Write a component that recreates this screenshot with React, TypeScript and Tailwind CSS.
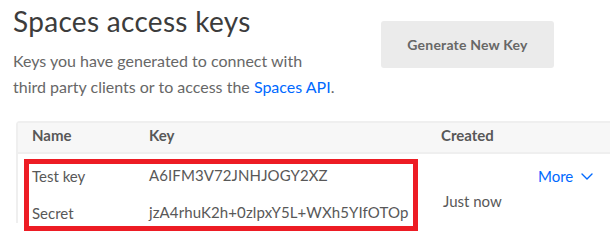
import React from "react";

const keys = [
  { label: "Test key", value: "A6IFM3V72JNHJOGY2XZ" },
  { label: "Secret", value: "jzA4rhuK2h+0zlpxY5L+WXh5YIfOTOp" },
];

function Chevron() {
  return (
    <svg width="12" height="7" viewBox="0 0 12 7" fill="none" className="ml-[8px]">
      <path d="M1 1l5 5 5-5" stroke="#0069ff" strokeWidth="1.4" strokeLinecap="round" strokeLinejoin="round" />
    </svg>
  );
}

export default function App() {
  return (
    <div className="relative w-[610px] h-[243px] overflow-hidden bg-white font-['Lato','Open_Sans',sans-serif]">
      <div className="flex">
        <div className="pl-[13px] pt-[5px] w-[368px]">
          <h1 className="text-[28px] leading-[32px] tracking-[0.3px] text-[#3c3c3c] font-normal">Spaces access keys</h1>
          <p className="mt-[11px] text-[16px] leading-[26px] text-[#676767]">
            Keys you have generated to connect with
            <br />
            third party clients or to access the{" "}
            <a className="text-[#0069ff]">Spaces API</a>.
          </p>
        </div>
        <div className="pl-[13px] pt-[21px]">
          <button className="w-[173px] h-[47px] rounded-[3px] bg-[#ebebeb] text-[14px] tracking-[0.2px] font-bold text-[#676767]">
            Generate New Key
          </button>
        </div>
      </div>

      <div className="ml-[16px] mt-[21px] w-[620px] border-l-2 border-t-2 border-[#efefef] rounded-tl-[4px]">
        <div className="flex h-[31px] bg-[#f7f7f7] border-b-2 border-[#efefef] pt-[2px] text-[15px] leading-[20px] font-bold text-[#585858]">
          <div className="w-[131px] pl-[14px]">Name</div>
          <div className="w-[292px]">Key</div>
          <div>Created</div>
        </div>
        <div className="flex text-[15px] leading-[20px] text-[#585858]">
          <div className="w-[131px] pl-[14px] pt-[12px] flex flex-col gap-[17px]">
            {keys.map((k) => (
              <div key={k.label}>{k.label}</div>
            ))}
          </div>
          <div className="w-[292px] pt-[11px] flex flex-col gap-[17px] tracking-[0.1px]">
            {keys.map((k) => (
              <div key={k.label}>{k.value}</div>
            ))}
          </div>
          <div className="w-[97px] pl-[2px] pt-[37px]">Just now</div>
          <div className="pt-[12px] flex items-center h-[20px] box-content text-[#0069ff]">
            More
            <Chevron />
          </div>
        </div>
      </div>

      <div className="absolute left-[24px] top-[159px] w-[394px] h-[72px] border-[5px] border-[#ed1c24]" />
    </div>
  );
}
